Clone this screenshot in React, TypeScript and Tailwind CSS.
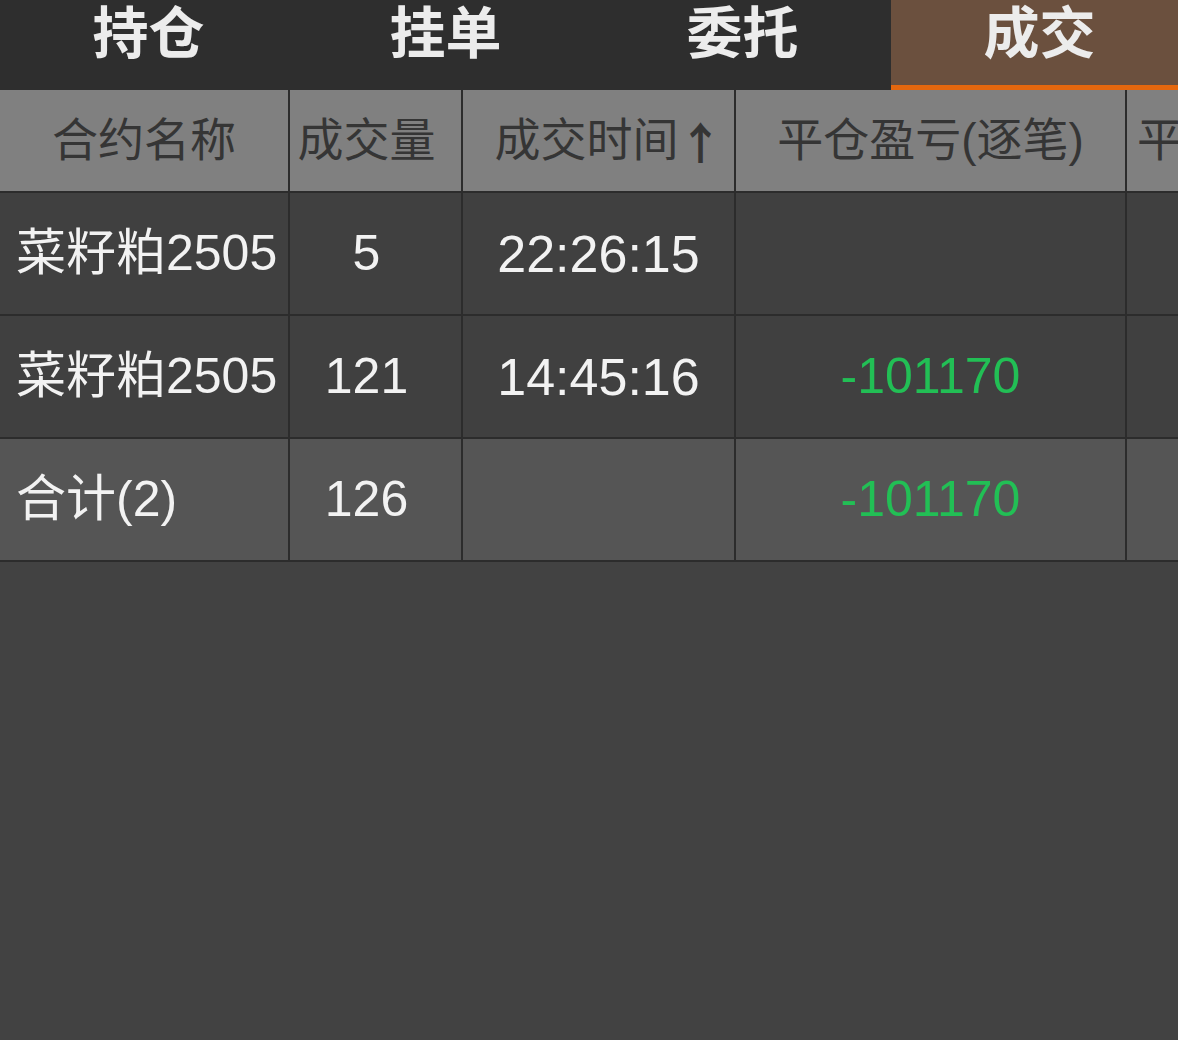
import React from 'react'

const TABS = ['持仓', '挂单', '委托', '成交']
const ACTIVE = 3

const COLS = ['w-[290px]', 'w-[173px]', 'w-[273px]', 'w-[391px]', 'w-[391px]']

interface Row {
  name: string
  qty: string
  time: string
  pnl: string
  total?: boolean
}

const ROWS: Row[] = [
  { name: '菜籽粕2505', qty: '5', time: '22:26:15', pnl: '' },
  { name: '菜籽粕2505', qty: '121', time: '14:45:16', pnl: '-101170' },
  { name: '合计(2)', qty: '126', time: '', pnl: '-101170', total: true },
]

const font = { fontFamily: '"Liberation Sans", "Noto Sans CJK SC", sans-serif' }

export default function App() {
  return (
    <div className="w-[1178px] h-[1040px] bg-[#424242] overflow-hidden" style={font}>
      {/* 顶部标签 */}
      <div className="flex h-[90px] bg-[#2e2e2e] w-[1188px]">
        {TABS.map((t, i) => (
          <div
            key={t}
            className={
              i === ACTIVE
                ? 'w-[297px] shrink-0 flex justify-center pt-[2px] bg-[#6b503e] border-b-[5px] border-[#e5670e]'
                : 'w-[297px] shrink-0 flex justify-center pt-[2px]'
            }
          >
            <span className="text-[56px] leading-[64px] font-bold text-[#ececec]">{t}</span>
          </div>
        ))}
      </div>

      {/* 表头 */}
      <div className="flex h-[103px] bg-[#808080] border-b-2 border-[#2c2c2c] text-[46px] text-[#353535] whitespace-nowrap">
        <div className={COLS[0] + ' shrink-0 flex items-center justify-center border-r-2 border-[#2c2c2c]'}>合约名称</div>
        <div className={COLS[1] + ' shrink-0 flex items-center justify-center pr-[18px] border-r-2 border-[#2c2c2c]'}>成交量</div>
        <div className={COLS[2] + ' shrink-0 flex items-center justify-center pl-[20px] border-r-2 border-[#2c2c2c]'}>
          成交时间
          <span className="font-bold text-[44px]" style={{ fontFamily: '"Noto Sans CJK SC", sans-serif' }}>↑</span>
        </div>
        <div className={COLS[3] + ' shrink-0 flex items-center justify-center border-r-2 border-[#2c2c2c]'}>平仓盈亏(逐笔)</div>
        <div className={COLS[4] + ' shrink-0 flex items-center pl-[10px] overflow-hidden'}>平仓盈亏(逐日)</div>
      </div>

      {/* 数据行 */}
      {ROWS.map((r, idx) => (
        <div
          key={idx}
          className={
            'flex h-[123px] border-b-2 border-[#2c2c2c] text-[50px] text-[#f2f2f2] ' +
            (r.total ? 'bg-[#555555]' : 'bg-[#404040]')
          }
        >
          <div className={COLS[0] + ' shrink-0 flex items-center pl-[16px] border-r-2 border-[#2c2c2c] whitespace-nowrap'}>
            {r.name}
          </div>
          <div className={COLS[1] + ' shrink-0 flex items-center justify-center pr-[18px] border-r-2 border-[#2c2c2c]'}>
            {r.qty}
          </div>
          <div className={COLS[2] + ' shrink-0 flex items-center justify-center border-r-2 border-[#2c2c2c] text-[52px]'}>
            {r.time}
          </div>
          <div className={COLS[3] + ' shrink-0 flex items-center justify-center border-r-2 border-[#2c2c2c] text-[#22bf55]'}>
            {r.pnl}
          </div>
          <div className={COLS[4] + ' shrink-0'} />
        </div>
      ))}
    </div>
  )
}
